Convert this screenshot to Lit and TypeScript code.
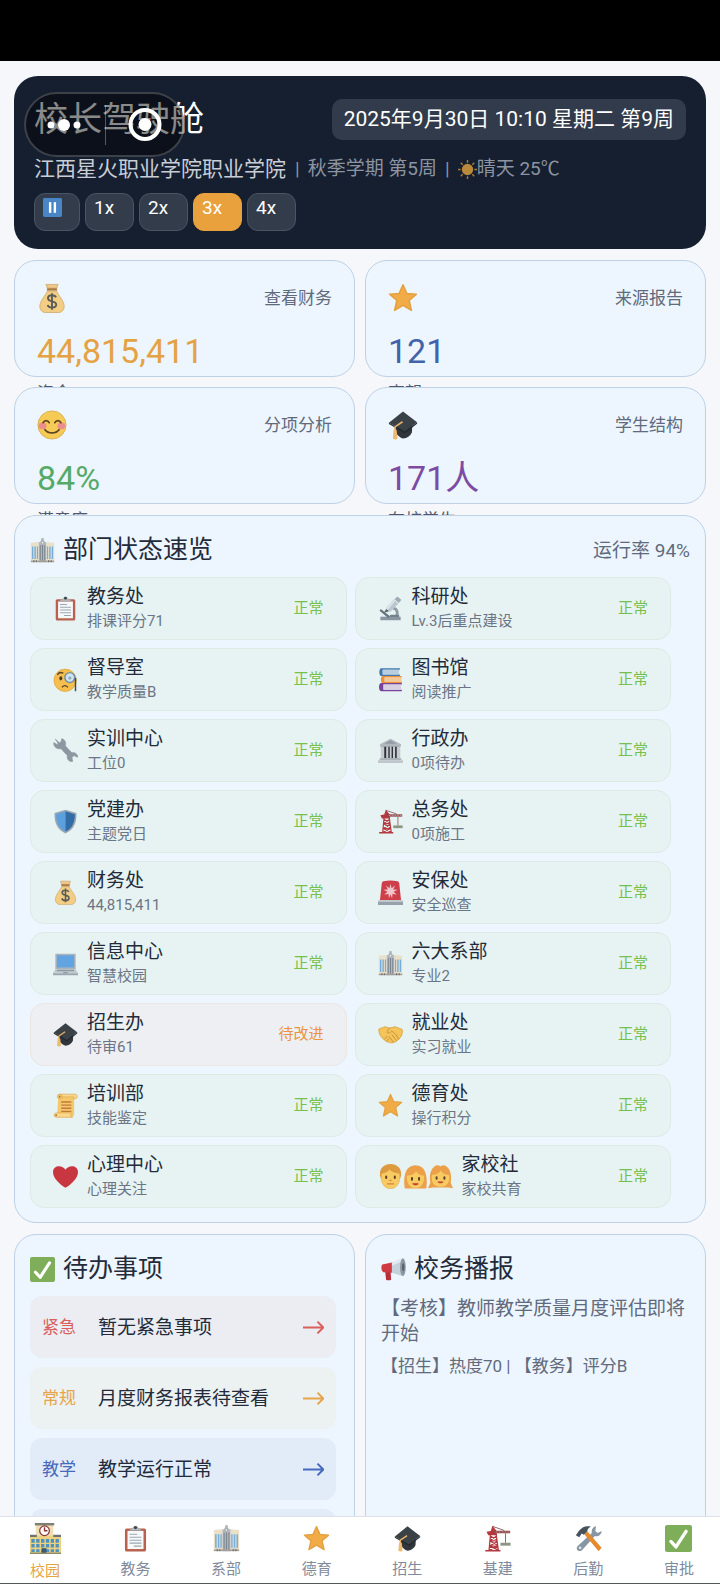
import { LitElement, html, css, svg, nothing, type TemplateResult } from 'lit'
import { customElement, property, state } from 'lit/decorators.js'
import { classMap } from 'lit/directives/class-map.js'

const FLAGS = [3, 8, 13, 18, 23, 28]

// All glyphs are drawn on a 32 x 32 canvas
const icons: Readonly<Record<string, TemplateResult>> = {
  money: svg`
    <path d="M11 8.500h10c1 4 8 10 8 16.500 0 4-3 6.500-6 6.500H9c-3 0-6-2.500-6-6.500C3 18.500 10 12.500 11 8.500z" fill="#f2cd83" stroke="#c9a468" stroke-width=".8"/>
    <path d="M9.500 1.500h13l-1.500 4H11z" fill="#f0c98a" stroke="#c9a468" stroke-width=".8"/>
    <rect x="10.500" y="5.500" width="11" height="2.600" rx="1" fill="#b07a3c"/>
    <path d="M20.300 15.400c-.8-1.700-2.400-2.300-4.300-2.300-2.500 0-4.300 1.200-4.300 3.200 0 4.600 8.800 2 8.800 6.700 0 2.100-2 3.300-4.500 3.300-2.300 0-4-.9-4.700-2.800M16 10.800v17.800" fill="none" stroke="#5c5c58" stroke-width="2"/>`,
  star: svg`
    <path d="M16 1.800l4.100 9.300 10.200.9-7.700 6.700 2.400 10.600L16 23.900l-9 5.400 2.400-10.600L1.700 12l10.200-.9z" fill="#f2ac47" stroke="#e3a040" stroke-width="1.600" stroke-linejoin="round"/>`,
  smile: svg`
    <circle cx="16" cy="16" r="15" fill="#f6cb55" stroke="#d9ae55" stroke-width="1"/>
    <ellipse cx="6" cy="17" rx="4.200" ry="3.600" fill="#ec8f8c"/>
    <ellipse cx="26" cy="17" rx="4.200" ry="3.600" fill="#ec8f8c"/>
    <path d="M6.500 13.500c1.500-3 5-3 6.500 0M19 13.500c1.500-3 5-3 6.500 0M8.500 21c3.500 4.500 11.500 4.500 15 0" fill="none" stroke="#5f4526" stroke-width="1.900" stroke-linecap="round"/>`,
  cap: svg`
    <path d="M8 15.500l8 5 10-6.500-.5 10c-2 4-5 6-9.500 6.500-3-1-6-3.500-8-6.500z" fill="#30363b"/>
    <path d="M16 1.500L31 13 18 23 1 13.500z" fill="#3b4247"/>
    <path d="M18 23l13-10v1.600L18 24.800 1 15v-1.500z" fill="#24292d"/>
    <path d="M15.500 12.500L7.500 18v5" fill="none" stroke="#e8b064" stroke-width="1.700"/>
    <path d="M6 21h3.200l1 9.500c-1.200 1.300-3.600 1.300-5 0z" fill="#efb96f"/>`,
  office: svg`
    <path d="M11 5h2l1.500-3h3L19 5h2v26H11z" fill="#b4b9bd"/>
    <path d="M14.500 2h3v-1.500h-3z" fill="#8f979d"/>
    <path d="M1 6l10-1v25H1zM31 6L21 5v25h10z" fill="#eadfc8"/>
    <path d="M2.500 11h1.800v16H2.500zM5.700 11h1.800v16H5.700zM8.800 11h1.600v16H8.800zM21.600 11h1.600v16h-1.600zM24.600 11h1.800v16h-1.800zM27.800 11h1.800v16h-1.800z" fill="#76aedb"/>
    <path d="M12.500 9h1.300v20h-1.300zM15.300 9h1.400v20h-1.400zM18.200 9h1.300v20h-1.300z" fill="#7c8590"/>
    <circle cx="16" cy="6" r="1.600" fill="#edf1f4" stroke="#7c8590" stroke-width=".6"/>
    <path d="M1 29h30v2H1z" fill="#a39f97"/>
    <path d="M4.400 28h1.200v3H4.400zM7.600 28h1v3h-1zM23.300 28h1.200v3h-1.200zM26.500 28h1.200v3h-1.200z" fill="#6b6b68"/>`,
  clipboard: svg`
    <rect x="3.500" y="4" width="25" height="27.500" rx="2" fill="#b9614f"/>
    <path d="M6.500 7h19v21.500h-19z" fill="#f7f8f9"/>
    <path d="M9 11h9M9 14.500h14M9 18h14M9 21.500h14M14 25h9" stroke="#9aa6b2" stroke-width="1.300"/>
    <path d="M9 6.500c0-2 3-2 4-2.600 0-3.200 6-3.200 6 0 1 .6 4 .6 4 2.600z" fill="#b8bec4" stroke="#8d959c" stroke-width=".6"/>
    <circle cx="16" cy="3" r="1.900" fill="#3f464d"/>`,
  microscope: svg`
    <path d="M19 15.500c6.500.5 8 9.500 1.500 12.500" fill="none" stroke="#8f9aa4" stroke-width="3.600"/>
    <path d="M3 26.500h26v4.500H3z" fill="#8896a1"/>
    <path d="M16 24h11v3H14z" fill="#74828d"/>
    <path d="M3.500 16.500l11.500 9-2 2.500L2 19z" fill="#66747f"/>
    <path d="M10.500 15.500L20 4.500l6 5.500-9.500 9.500-5 .5z" fill="#bcc6ce"/>
    <path d="M10.500 15.500L20 4.500l2 2-10 12z" fill="#dbe2e7"/>
    <path d="M21 4l4-3.500 5 4.500-3.500 4z" fill="#a0abb5"/>
    <path d="M7.500 21.500l3-5 3.500 3z" fill="#56636e"/>`,
  monocle: svg`
    <circle cx="15.500" cy="17" r="14.300" fill="#f5bf4e" stroke="#e0a940" stroke-width="1"/>
    <path d="M6 9.500c1.500-2.500 4-3 6.500-1.800" fill="none" stroke="#5f4526" stroke-width="1.900" stroke-linecap="round"/>
    <ellipse cx="10" cy="14.500" rx="1.900" ry="2.700" fill="#4d3a24"/>
    <path d="M12 25.500c1.500-2.200 5-2.200 6.500 0" fill="none" stroke="#5f4526" stroke-width="1.800" stroke-linecap="round"/>
    <circle cx="21.500" cy="13.500" r="6.300" fill="#cfe4f1" stroke="#7590a3" stroke-width="1.900"/>
    <circle cx="21.500" cy="14" r="2" fill="#8fa9ba"/>
    <path d="M28.800 14v17" stroke="#444b50" stroke-width="1.900"/>`,
  books: svg`
    <path d="M4 1.500h24v2H6v6h22v2H4c-3 0-3-10 0-10z" fill="#3f79ad"/>
    <path d="M6 3.500h21v6H6z" fill="#b9cfe0"/>
    <path d="M6 11.500h24.500v2H8.500v5h22v2H6c-3 0-3-9 0-9z" fill="#ee9038"/>
    <path d="M8.500 13.500H30v5H8.500z" fill="#f3ca97"/>
    <path d="M4 20.500h26.500v2H7v6.500h23.500v2H4c-3.500 0-3.500-10.500 0-10.500z" fill="#77449a"/>
    <path d="M7 22.500h22.500V29H7z" fill="#d9cfe3"/>`,
  wrench: svg`
    <path d="M3 1.500l5 4.500 2.500-1 .6-4c4.400 1 6 5 4.600 9l8.300 9c4-1 7.500 1.300 7.500 5.500l-4.500-2-2.800 2 .8 5.500c-5 .5-7.700-3.500-6.600-7.500l-8-8.800C5.500 14.500.5 11.500 1 6l4.500 2.500 1-2z" fill="#8c97a2" stroke="#8c97a2" stroke-width="1" stroke-linejoin="round"/>`,
  bank: svg`
    <path d="M16 1l13.500 7v3h-27V8z" fill="#b2b8bf"/>
    <path d="M16 3l8 4.500H8z" fill="#939aa3"/>
    <path d="M4 11h24v15H4z" fill="#2e3338"/>
    <path d="M3.500 11H8v15H3.500zM10.500 11h2.700v15h-2.700zM15 11h2.400v15H15zM19.200 11h2.700v15h-2.700zM24 11h4.500v15H24z" fill="#c6cbd1"/>
    <path d="M2 26h28v2.500H2z" fill="#aab1b9"/>
    <path d="M0 28.500h32V32H0z" fill="#c0c6cc"/>`,
  shield: svg`
    <path d="M16 .8l14 4.400c.5 12-3 21-14 26.300C5 26.200 1.500 17.200 2 5.200z" fill="#9aa7b2"/>
    <path d="M16 3L4 6.800C4 17 7 24.500 16 29.200z" fill="#5b9fdd"/>
    <path d="M16 3l12 3.800C28 17 25 24.500 16 29.200z" fill="#326ca6"/>`,
  crane: svg`
    <path d="M6 30L8 8h6l3 22M7.500 13l7.500 4.500M15 13l-8 5.500M7 19l9 5M16 19.500L6.500 25M6.500 25l10 4.500M16 25L6 30M7 18.800h9M6.500 25h10" fill="none" stroke="#b4393f" stroke-width="1.500"/>
    <path d="M1.500 29.500h18v2h-18zM3 8l5-1 2-6 5 6v5H5z" fill="#b4393f"/>
    <path d="M12 6.800h19v3H12z" fill="#8d4a4c"/>
    <path d="M14 8.300h16" stroke="#dba7a6" stroke-width=".9" stroke-dasharray="2 1.500"/>
    <path d="M10 1.500L24 6.500M25.500 9.800V21" stroke="#8b5d5c" stroke-width="1.100"/>
    <path d="M19.500 21h12v3.500h-12z" fill="#8d9585"/>`,
  siren: svg`
    <path d="M7 1.500c6-1.200 12-1.200 18 0 1.500.5 2 1.500 2.200 3L29.500 26h-27L4.800 4.500C5 3 5.500 2 7 1.500z" fill="#cf3f49"/>
    <path d="M16 5l1.400 5.600 4.400-3.600-2.300 5.300 5.500.2-5 2.500 4 4-5.300-1.300L18 23.500l-2-5-2 5-.7-5.800L8 19l4-4-5-2.500 5.500-.2L10.200 7l4.400 3.600z" fill="#eec6cb"/>
    <path d="M1.500 25.500h29L32 28v4H0v-4z" fill="#97a1ac"/>
    <path d="M1.500 25.500h29L32 28H0z" fill="#c0c7cd"/>`,
  laptop: svg`
    <path d="M4 3.500h24c.8 0 1 .5 1 1V23H3V4.500c0-.5.200-1 1-1z" fill="#a8b3bc"/>
    <path d="M5 5.500h22v15.500H5z" fill="#62a3e2"/>
    <path d="M3 23h26l3 5.500H0z" fill="#c4ccd2"/>
    <path d="M5.500 24h21l1 1.800h-23z" fill="#8b969f"/>
    <path d="M0 28.500h32v1.500c0 .8-.5 1-1 1H1c-.5 0-1-.2-1-1z" fill="#9ca7af"/>
    <path d="M13 27h6v1.500h-6z" fill="#8b969f"/>`,
  handshake: svg`
    <path d="M1 9l8-3 6 1.800L22 6l9 3.500c.8 6-1 9.500-4.500 12.500-2 2-4 4-6 3.800-2 1.700-4 1.200-5 .2C12 26 9.500 25 8 22.500 3.500 20 1 15 1 9z" fill="#f3c45a" stroke="#d99f3e" stroke-width="1"/>
    <path d="M15 7.800c-2 1.500-3.500 4-3 6 2 1 4-.5 5.500-2.200 4 2.400 7 6 9 10.400M14.500 19l5 6.500M18 16.500l5.500 7M8.500 22l3-3.500M11 24.500l3-3" fill="none" stroke="#c98f35" stroke-width="1.200" stroke-linecap="round"/>`,
  scroll: svg`
    <path d="M7 3h20v24c0 2.500-1.500 4-3.500 4H5z" fill="#f6c86c"/>
    <path d="M8 1.500h20c4 0 4 6 0 6h-1.500V5H8z" fill="#fbd98c" stroke="#d9a04b" stroke-width=".8"/>
    <circle cx="8.500" cy="4.500" r="3" fill="#f6c86c" stroke="#d9a04b" stroke-width=".8"/>
    <circle cx="8.500" cy="4.500" r="1.100" fill="#a9702f"/>
    <path d="M10.500 11.500h13M10.500 15.500h13M10.500 19.500h13M10.500 23.500h13" stroke="#c47a3a" stroke-width="1.700"/>
    <path d="M4 25.500h19.500c-1.500 2-.5 5.500 1.500 5.500H4c-3.500 0-3.500-5.500 0-5.500z" fill="#fbd98c" stroke="#d9a04b" stroke-width=".8"/>
    <circle cx="4" cy="28.500" r="1.200" fill="#a9702f"/>`,
  heart: svg`
    <path d="M16 30.500C9 26.500 0 18 0 10.500 0 1.500 12 .500 16 7.500 20 .500 32 1.500 32 10.500 32 18 23 26.500 16 30.500z" fill="#c8373f"/>`,
  man: svg`
    <path d="M2.500 15C1.500 5 8 0 16 0s14.500 5 13.500 15L28 19H4z" fill="#dd9a3f"/>
    <path d="M4.500 12c5-.5 8-2 10-5 3 3 8 4.500 13 5 2 11-3 19.500-11.500 19.500S2.500 23 4.500 12z" fill="#f8cb62" stroke="#e0a74c" stroke-width=".7"/>
    <path d="M10.500 16v2M21.500 16v2" stroke="#5b4224" stroke-width="2.600" stroke-linecap="round"/>
    <path d="M14.500 21h3" stroke="#cf8a35" stroke-width="1.500"/>
    <path d="M12 25.500h8" stroke="#d78241" stroke-width="1.600" stroke-linecap="round"/>`,
  woman: svg`
    <path d="M2 30C0 12 5 1.500 16 1.500S32 12 30 30c0 1-1 1.500-2 1.500H4C3 31.500 2 31 2 30z" fill="#eba049"/>
    <path d="M5 15c6 0 10-2.500 11.500-6 2 3.500 5 5.500 10.500 6 .5 9.500-3.500 16-11 16S4.500 24.500 5 15z" fill="#f8cb62"/>
    <path d="M11.500 18v2M20.500 18v2" stroke="#5b4224" stroke-width="2.600" stroke-linecap="round"/>
    <path d="M12 24.500h8c-1 3.500-7 3.500-8 0z" fill="#c43b34"/>`,
  girl: svg`
    <path d="M3 24C1 13 4 6 9 2.500c2-1.500 5-1 7 .5 2-1.500 5-2 7-.5 5 3.500 8 10.500 6 21.500l3 7-6-1H6l-6 1z" fill="#eba049"/>
    <path d="M5 14c5.500 0 10-2.500 11-6 1.500 3.500 5.500 5.500 11 6 1.500 9-2.500 15-11 15S3.500 23 5 14z" fill="#f8cb62"/>
    <path d="M11 17v2M21 17v2" stroke="#5b4224" stroke-width="2.600" stroke-linecap="round"/>
    <path d="M12 22.500h8c-1 3-7 3-8 0z" fill="#c43b34"/>`,
  check: svg`
    <rect width="32" height="32" rx="2.500" fill="#7fae5a"/>
    <path d="M7 19.500l6 6.500L25 7.500" fill="none" stroke="#fff" stroke-width="4" stroke-linecap="round" stroke-linejoin="round"/>`,
  megaphone: svg`
    <path d="M5 15h7l1 14c-2 1.200-5 1.200-6.500 0z" fill="#b72f39"/>
    <path d="M1.500 9.500L14 7v13L3 19.500c-3-1.500-3-8-1.500-10z" fill="#cf3a43"/>
    <path d="M14 7L28 1.500v23L14 20z" fill="#c6d2db"/>
    <path d="M14 7L28 1.500v4L14 11z" fill="#e3eaef"/>
    <ellipse cx="28" cy="13" rx="3.600" ry="11.300" fill="#8b98a2"/>
    <ellipse cx="28.500" cy="13" rx="1.500" ry="5" fill="#54616b"/>`,
  school: svg`
    <path d="M6 1h18v13H6z" fill="#f0dfb4"/>
    <path d="M5 0h20v2.500H5z" fill="#7c7f73"/>
    <path d="M0 13h32v18.500H0z" fill="#ecd183"/>
    <path d="M0 12h7v2.500H0zM24 12h8v2.500h-8z" fill="#6c7377"/>
    <circle cx="15" cy="8" r="5" fill="#fff" stroke="#8b3438" stroke-width="1.300"/>
    <path d="M15 4.500V8h3" fill="none" stroke="#8b3438" stroke-width="1.400"/>
    ${FLAGS.map(x => svg`
      <path d="M${x - 1.6} 16.500h3.400v3.800h-3.400zM${x - 1.6} 21.800h3.400v3.600h-3.400zM${x - 1.6} 27h3.400v3h-3.400z" fill="#4d93bd"/>`)}
    <path d="M12 26h5v5.500h-5z" fill="#3d5b6b"/>
    <path d="M0 30.500h32V32H0z" fill="#8b8b6a"/>`,
  tools: svg`
    <path d="M25 1.500c-3.500.5-6 4-5 8L3.500 24.500c-4 3.500 1 9 5 5L23.500 13c4 1 8-1.500 8-6l-4.500 2.500-3-2.500z" fill="#8796a3"/>
    <circle cx="6" cy="27" r="1.600" fill="#dfe5ea"/>
    <path d="M11 11l3.500-3.500L31.500 27 28 31z" fill="#e58b2e"/>
    <path d="M1 12l4-5.500c4-4.500 8-6 14-4.500-3 1-4 2.500-4.500 5.500l-4 4-2.500-1.500L5 14.500z" fill="#46535d"/>`,
  pause: svg`
    <rect width="32" height="32" rx="2.500" fill="#4a86c5"/>
    <rect x="10" y="7" width="4" height="18" fill="#fff"/>
    <rect x="18" y="7" width="4" height="18" fill="#fff"/>`,
  sun: svg`
    <circle cx="16" cy="16" r="9.500" fill="#b98a3c"/>
    <path d="M16 0v4.500M16 27.500V32M0 16h4.500M27.500 16H32M4.700 4.700l3.200 3.200M24.100 24.100l3.200 3.200M4.700 27.300l3.200-3.200M24.100 7.900l3.200-3.200" stroke="#b07a35" stroke-width="2.400"/>`,
  arrow: svg`
    <path d="M0 16h31M22 7l9 9-9 9" fill="none" stroke="currentColor" stroke-width="3"/>`,
}

type Tone = 'gold' | 'blue' | 'green' | 'purple'

interface Kpi {
  readonly icon: string
  readonly action: string
  readonly value: string
  readonly label: string
  readonly tone: Tone
}

interface Department {
  readonly icons: readonly string[]
  readonly name: string
  readonly note: string
  readonly warn?: boolean
}

interface Todo {
  readonly kind: 'urgent' | 'routine' | 'teaching'
  readonly tag: string
  readonly text: string
}

const SPEEDS = ['1x', '2x', '3x', '4x']

const KPIS: readonly Kpi[] = [
  { icon: 'money', action: '查看财务', value: '44,815,411', label: '资金', tone: 'gold' },
  { icon: 'star', action: '来源报告', value: '121', label: '声望', tone: 'blue' },
  { icon: 'smile', action: '分项分析', value: '84%', label: '满意度', tone: 'green' },
  { icon: 'cap', action: '学生结构', value: '171人', label: '在校学生', tone: 'purple' },
]

const DEPARTMENTS: readonly Department[] = [
  { icons: ['clipboard'], name: '教务处', note: '排课评分71' },
  { icons: ['microscope'], name: '科研处', note: 'Lv.3后重点建设' },
  { icons: ['monocle'], name: '督导室', note: '教学质量B' },
  { icons: ['books'], name: '图书馆', note: '阅读推广' },
  { icons: ['wrench'], name: '实训中心', note: '工位0' },
  { icons: ['bank'], name: '行政办', note: '0项待办' },
  { icons: ['shield'], name: '党建办', note: '主题党日' },
  { icons: ['crane'], name: '总务处', note: '0项施工' },
  { icons: ['money'], name: '财务处', note: '44,815,411' },
  { icons: ['siren'], name: '安保处', note: '安全巡查' },
  { icons: ['laptop'], name: '信息中心', note: '智慧校园' },
  { icons: ['office'], name: '六大系部', note: '专业2' },
  { icons: ['cap'], name: '招生办', note: '待审61', warn: true },
  { icons: ['handshake'], name: '就业处', note: '实习就业' },
  { icons: ['scroll'], name: '培训部', note: '技能鉴定' },
  { icons: ['star'], name: '德育处', note: '操行积分' },
  { icons: ['heart'], name: '心理中心', note: '心理关注' },
  { icons: ['man', 'woman', 'girl'], name: '家校社', note: '家校共育' },
]

const TODOS: readonly Todo[] = [
  { kind: 'urgent', tag: '紧急', text: '暂无紧急事项' },
  { kind: 'routine', tag: '常规', text: '月度财务报表待查看' },
  { kind: 'teaching', tag: '教学', text: '教学运行正常' },
  { kind: 'teaching', tag: '', text: '' },
]

const TABS = [
  { icon: 'school', label: '校园' },
  { icon: 'clipboard', label: '教务' },
  { icon: 'office', label: '系部' },
  { icon: 'star', label: '德育' },
  { icon: 'cap', label: '招生' },
  { icon: 'crane', label: '基建' },
  { icon: 'tools', label: '后勤' },
  { icon: 'check', label: '审批' },
] as const

@customElement('campus-icon')
export class CampusIcon extends LitElement {
  static override styles = css`
    :host {
      display: block;
      flex: none;
      width: 25px;
      height: 25px;
    }

    svg {
      display: block;
      width: 100%;
      height: 100%;
    }
  `

  @property()
  name = ''

  override render() {
    return html`<svg viewBox="0 0 32 32" aria-hidden="true">${icons[this.name] ?? nothing}</svg>`
  }
}

@customElement('app-root')
export class AppRoot extends LitElement {
  static override styles = css`
    :host {
      --ink: #232b3b;
      --muted: #616a7d;
      --line: #bed1e5;
      display: flex;
      flex-direction: column;
      height: 100vh;
      background: #f5f7fb;
      color: var(--ink);
      font-family: Roboto, 'Noto Sans CJK SC', sans-serif;
      font-size: 19px;
      line-height: 25px;
    }

    * {
      box-sizing: border-box;
    }

    h1,
    h2,
    h3,
    p,
    ul {
      margin: 0;
      padding: 0;
      font-weight: 400;
      list-style: none;
    }

    button {
      margin: 0;
      padding: 0;
      border: 0;
      background: none;
      color: inherit;
      font: inherit;
      text-align: left;
      cursor: pointer;
    }

    a {
      color: inherit;
      text-decoration: none;
    }

    .system-bar {
      flex: none;
      height: 61px;
      background: #000;
    }

    main {
      flex: 1;
      min-height: 0;
      overflow-y: auto;
      scrollbar-width: none;
      padding: 15px 14px;
      display: flex;
      flex-direction: column;
      gap: 11px;
    }

    main > * {
      flex: none;
    }

    .hero {
      position: relative;
      padding: 22px 20px 18px;
      border-radius: 24px;
      background: #151f30;
      color: #fff;
    }

    .hero-top {
      display: flex;
      align-items: center;
      justify-content: space-between;
    }

    h1 {
      font-size: 34px;
      line-height: 42px;
    }

    .clock {
      padding: 8px 12px;
      border-radius: 10px;
      background: #313b4b;
      font-size: 21px;
    }

    .campus {
      display: flex;
      align-items: center;
      margin: 15px 0 10px;
      color: #c8cdd6;
      font-size: 21px;
      line-height: 28px;
    }

    .term {
      display: flex;
      align-items: center;
      margin-left: 9px;
      color: #8d94a1;
      font-size: 19px;
    }

    .divider {
      padding: 0 8px;
    }

    .term .divider:first-child {
      padding-left: 0;
    }

    .term campus-icon {
      width: 19px;
      height: 19px;
    }

    .speeds {
      display: flex;
      gap: 5px;
    }

    .speed {
      display: flex;
      width: 49px;
      height: 38px;
      padding: 1px 8px;
      border: 1px solid #4a5463;
      border-radius: 11px;
      background: #323c4b;
    }

    .speed.pause {
      width: 46px;
    }

    .speed campus-icon {
      width: 19px;
      height: 19px;
      margin-top: 3px;
    }

    .speed.on {
      border-color: #e8a13c;
      background: #e8a13c;
    }

    /* Host app's floating menu, sits over the page title */
    .capsule {
      position: absolute;
      top: 16px;
      left: 10px;
      display: flex;
      align-items: center;
      width: 161px;
      height: 65px;
      border: 2px solid rgba(255, 255, 255, 0.2);
      border-radius: 33px;
      background: rgba(0, 0, 0, 0.46);
    }

    .capsule button {
      flex: 1;
      display: flex;
      align-items: center;
      justify-content: center;
      height: 100%;
      color: #fff;
    }

    .capsule button + button::before {
      content: '';
      position: absolute;
      left: 50%;
      height: 40px;
      border-left: 1px solid rgba(255, 255, 255, 0.3);
    }

    .kpis {
      display: grid;
      grid-template-columns: 1fr 1fr;
      grid-auto-rows: 117px;
      gap: 10px;
    }

    .kpi,
    .panel {
      isolation: isolate;
      border: 1px solid var(--line);
      border-radius: 22px;
      background: #edf6fe;
    }

    .kpi {
      padding: 20px 22px;
    }

    .kpi-head {
      display: flex;
      align-items: center;
      justify-content: space-between;
      height: 34px;
      color: var(--muted);
      font-size: 17px;
    }

    .kpi-head campus-icon {
      width: 30px;
      height: 30px;
    }

    .value {
      margin: 14px 0 8px;
      font-size: 34px;
      line-height: 44px;
    }

    .gold {
      color: #e5a243;
    }

    .blue {
      color: #4263a9;
    }

    .green {
      color: #56aa69;
    }

    .purple {
      color: #7d4ba3;
    }

    .kpi-label {
      color: #50596b;
      font-size: 17px;
    }

    .panel {
      padding: 15px 15px 14px;
    }

    .panel-head {
      display: flex;
      align-items: center;
      justify-content: space-between;
      height: 38px;
      color: var(--muted);
    }

    h2 {
      display: flex;
      align-items: center;
      gap: 8px;
      color: var(--ink);
      font-size: 25px;
      line-height: 38px;
    }

    h3 {
      font-size: 19px;
    }

    .departments {
      display: grid;
      grid-template-columns: 1fr 1fr;
      gap: 8px;
      margin: 8px 19px 0 0;
    }

    .department {
      display: flex;
      align-items: center;
      height: 63px;
      padding: 0 22px;
      border: 1px solid #dcebe5;
      border-radius: 14px;
      background: #e7f3f2;
    }

    .department.warn {
      border-color: #ebe5e3;
      background: #edeff2;
    }

    .department div {
      flex: 1;
      padding-left: 9px;
    }

    .department p {
      color: #6b7586;
      font-size: 15px;
      line-height: 24px;
    }

    .status {
      color: #76c04c;
      font-size: 15px;
    }

    .warn .status {
      color: #eb9440;
    }

    .columns {
      display: grid;
      grid-template-columns: 1fr 1fr;
      gap: 10px;
    }

    .todos {
      display: grid;
      gap: 9px;
      margin: 8px 3px 0 0;
    }

    .todo {
      display: flex;
      align-items: center;
      width: 100%;
      height: 62px;
      padding: 0 12px;
      border-radius: 12px;
    }

    .todo .tag {
      width: 56px;
      font-size: 17px;
    }

    .todo .text {
      flex: 1;
      color: var(--ink);
    }

    .todo campus-icon {
      width: 21px;
      height: 21px;
    }

    .urgent {
      background: #ebedf3;
      color: #d9605c;
    }

    .routine {
      background: #ecf1f2;
      color: #e6a54a;
    }

    .teaching {
      background: #e2ecf8;
      color: #4668bd;
    }

    .news {
      display: grid;
      gap: 8px;
      margin-top: 8px;
      color: var(--muted);
    }

    .news .minor {
      font-size: 17px;
    }

    nav {
      flex: none;
      display: flex;
      justify-content: space-between;
      height: 68px;
      padding: 4px 1px 0 5px;
      border-top: 1px solid #dde1e8;
      border-bottom: 1px solid #55585c;
      background: #fff;
    }

    .tab {
      display: flex;
      flex-direction: column;
      align-items: center;
      justify-content: center;
      gap: 7px;
      width: 80px;
      color: #7f8a9c;
      font-size: 15px;
      line-height: 20px;
    }

    .tab campus-icon {
      width: 27px;
      height: 27px;
    }

    .tab.on {
      color: #e5a53f;
    }

    .tab.on campus-icon {
      width: 31px;
      height: 31px;
    }
  `

  @state()
  private speed = '3x'

  @state()
  private tab = '校园'

  private renderHero() {
    return html`
      <header class="hero">
        <div class="hero-top">
          <h1>校长驾驶舱</h1>
          <time class="clock">2025年9月30日 10:10 星期二 第9周</time>
        </div>
        <p class="campus">
          江西星火职业学院职业学院
          <span class="term">
            <span class="divider">|</span>
            秋季学期 第5周
            <span class="divider">|</span>
            <campus-icon name="sun"></campus-icon>
            晴天 25℃
          </span>
        </p>
        <div class="speeds">
          <button class="speed pause" aria-label="暂停"><campus-icon name="pause"></campus-icon></button>
          ${SPEEDS.map(
            s => html`
              <button
                class=${classMap({ speed: true, on: s === this.speed })}
                @click=${() => (this.speed = s)}
              >${s}</button>
            `
          )}
        </div>
        <div class="capsule">
          <button aria-label="更多">
            <svg width="36" height="14" viewBox="0 0 36 14" fill="currentColor">
              <circle cx="4" cy="7" r="3.500" />
              <circle cx="17" cy="7" r="6" />
              <circle cx="30" cy="7" r="3.500" />
            </svg>
          </button>
          <button aria-label="关闭">
            <svg width="36" height="36" viewBox="0 0 36 36">
              <circle cx="19" cy="17.500" r="14.500" fill="none" stroke="currentColor" stroke-width="4" />
              <circle cx="19" cy="17.500" r="6.500" fill="currentColor" />
            </svg>
          </button>
        </div>
      </header>
    `
  }

  private renderKpi(kpi: Kpi) {
    return html`
      <article class="kpi">
        <div class="kpi-head">
          <campus-icon name=${kpi.icon}></campus-icon>
          <a href="#">${kpi.action}</a>
        </div>
        <p class="value ${kpi.tone}">${kpi.value}</p>
        <p class="kpi-label">${kpi.label}</p>
      </article>
    `
  }

  private renderDepartment(d: Department) {
    return html`
      <li class=${classMap({ department: true, warn: !!d.warn })}>
        ${d.icons.map(name => html`<campus-icon name=${name}></campus-icon>`)}
        <div>
          <h3>${d.name}</h3>
          <p>${d.note}</p>
        </div>
        <span class="status">${d.warn ? '待改进' : '正常'}</span>
      </li>
    `
  }

  private renderTodo(todo: Todo) {
    return html`
      <li>
        <button class="todo ${todo.kind}">
          <span class="tag">${todo.tag}</span>
          <span class="text">${todo.text}</span>
          <campus-icon name="arrow"></campus-icon>
        </button>
      </li>
    `
  }

  override render() {
    return html`
      <div class="system-bar"></div>
      <main>
        ${this.renderHero()}
        <section class="kpis">${KPIS.map(k => this.renderKpi(k))}</section>
        <section class="panel">
          <div class="panel-head">
            <h2><campus-icon name="office"></campus-icon>部门状态速览</h2>
            <span>运行率 94%</span>
          </div>
          <ul class="departments">${DEPARTMENTS.map(d => this.renderDepartment(d))}</ul>
        </section>
        <div class="columns">
          <section class="panel">
            <h2><campus-icon name="check"></campus-icon>待办事项</h2>
            <ul class="todos">${TODOS.map(t => this.renderTodo(t))}</ul>
          </section>
          <section class="panel">
            <h2><campus-icon name="megaphone"></campus-icon>校务播报</h2>
            <div class="news">
              <p>【考核】教师教学质量月度评估即将开始</p>
              <p class="minor">【招生】热度70 | 【教务】评分B</p>
            </div>
          </section>
        </div>
      </main>
      <nav>
        ${TABS.map(
          t => html`
            <button
              class=${classMap({ tab: true, on: t.label === this.tab })}
              @click=${() => (this.tab = t.label)}
            >
              <campus-icon name=${t.icon}></campus-icon>
              ${t.label}
            </button>
          `
        )}
      </nav>
    `
  }
}

declare global {
  interface HTMLElementTagNameMap {
    'app-root': AppRoot
    'campus-icon': CampusIcon
  }
}
